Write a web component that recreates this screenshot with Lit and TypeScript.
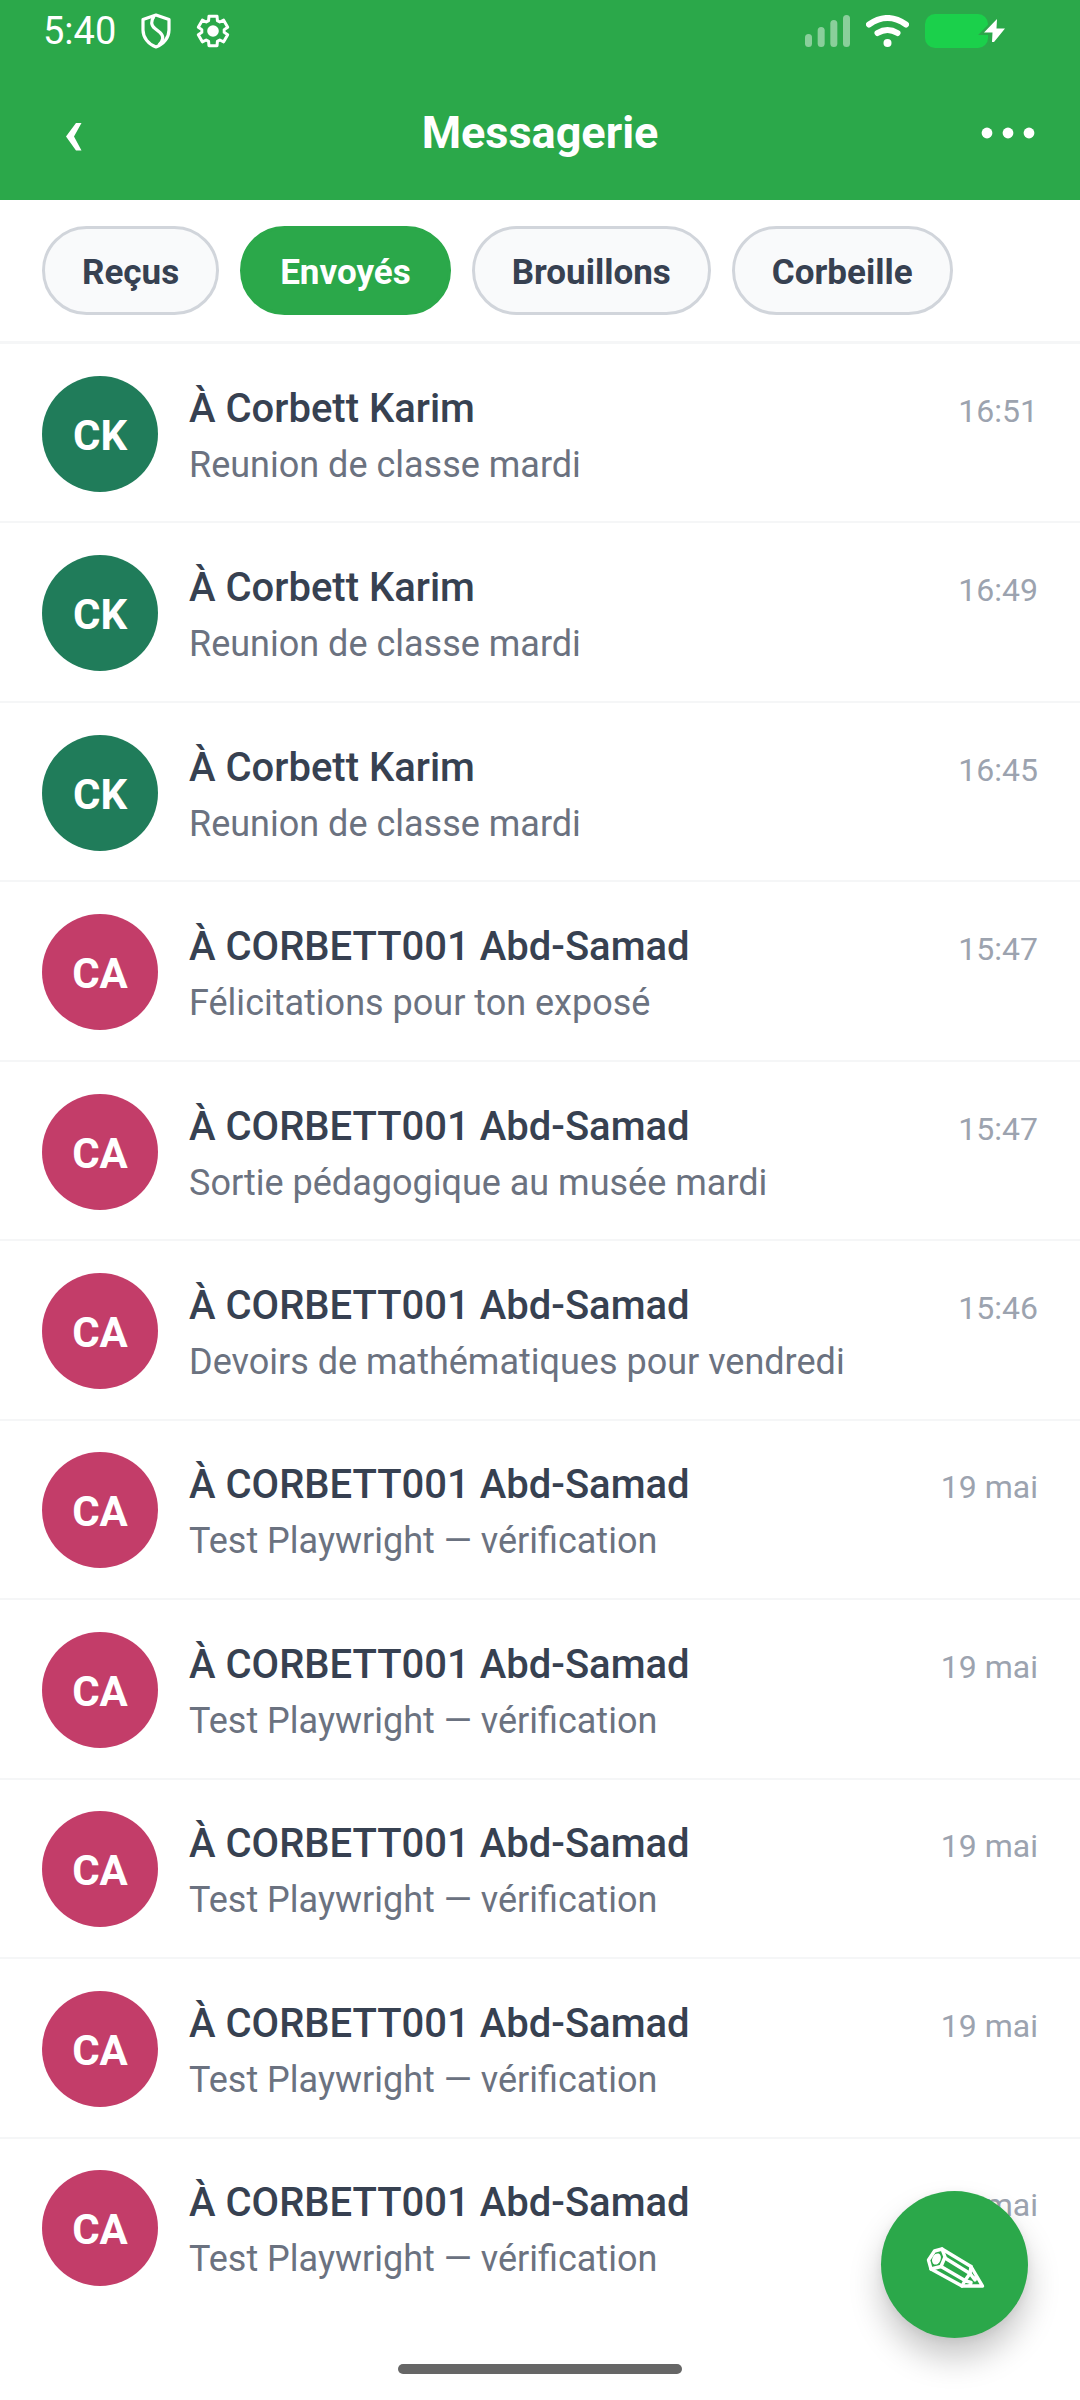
import { LitElement, html, css, svg } from "lit";
import { customElement, property, state } from "lit/decorators.js";
import { classMap } from "lit/directives/class-map.js";

interface Message {
  initials: string;
  name: string;
  subject: string;
  time: string;
  tone: "teal" | "pink";
}

const karim = (time: string): Message => ({
  initials: "CK",
  name: "À Corbett Karim",
  subject: "Reunion de classe mardi",
  time,
  tone: "teal",
});

const samad = (subject: string, time: string): Message => ({
  initials: "CA",
  name: "À CORBETT001 Abd-Samad",
  subject,
  time,
  tone: "pink",
});

const messages: Message[] = [
  karim("16:51"),
  karim("16:49"),
  karim("16:45"),
  samad("Félicitations pour ton exposé", "15:47"),
  samad("Sortie pédagogique au musée mardi", "15:47"),
  samad("Devoirs de mathématiques pour vendredi", "15:46"),
  samad("Test Playwright — vérification", "19 mai"),
  samad("Test Playwright — vérification", "19 mai"),
  samad("Test Playwright — vérification", "19 mai"),
  samad("Test Playwright — vérification", "19 mai"),
  samad("Test Playwright — vérification", "19 mai"),
];

const folders = ["Reçus", "Envoyés", "Brouillons", "Corbeille"];

/** Outline of a six-toothed cog centred on 17,17. */
const gearPath = (() => {
  const teeth = 6;
  const points: string[] = [];
  for (let i = 0; i < teeth; i++) {
    const a = (i * 2 * Math.PI) / teeth - Math.PI / 2;
    for (const [r, d] of [[11.3, -0.4], [15.2, -0.27], [15.2, 0.27], [11.3, 0.4]]) {
      points.push(`${(17 + r * Math.cos(a + d)).toFixed(2)} ${(17 + r * Math.sin(a + d)).toFixed(2)}`);
    }
  }
  return `M${points.join("L")}Z`;
})();

@customElement("status-bar")
export class StatusBar extends LitElement {
  static styles = css`
    :host {
      display: flex;
      align-items: center;
      height: 62px;
      padding: 0 74px 0 43px;
      color: #fff;
    }
    .clock {
      font-size: 38px;
      line-height: 44px;
    }
    .left,
    .right {
      display: flex;
      align-items: center;
    }
    .left {
      gap: 25px;
    }
    .right {
      gap: 16px;
      margin-left: auto;
    }
    svg {
      display: block;
    }
  `;

  render() {
    return html`
      <div class="left">
        <span class="clock">5:40</span>
        <svg width="30" height="36" viewBox="0 0 30 36" fill="none" stroke="#fff" stroke-width="3.2" stroke-linejoin="round" aria-hidden="true">
          <path d="M15 2 28 6.500V17C28 24.500 22.500 31.500 15 34C7.500 31.500 2 24.500 2 17V6.500Z" />
          <path d="M13 3.500C9.500 8 10 12.500 14 15.500L19 19.500C23 23 22.500 27.500 18 32" />
        </svg>
        <svg width="34" height="34" viewBox="0 0 34 34" aria-hidden="true">
          <path d=${gearPath} fill="none" stroke="#fff" stroke-width="3" stroke-linejoin="round" />
          <circle cx="17" cy="17" r="5.800" fill="#fff" />
        </svg>
      </div>
      <div class="right">
        <svg width="45" height="32" viewBox="0 0 45 32" fill="#fff" fill-opacity="0.450" aria-hidden="true">
          <rect x="0" y="19" width="7" height="13" rx="3.500" />
          <rect x="12.670" y="12" width="7" height="20" rx="3.500" />
          <rect x="25.330" y="5" width="7" height="27" rx="3.500" />
          <rect x="38" y="0" width="7" height="32" rx="3.500" />
        </svg>
        <svg width="43" height="32" viewBox="0 0 43 32" fill="none" stroke="#fff" stroke-width="6" stroke-linecap="round" aria-hidden="true">
          <path d="M3 9.500Q21.500 -3.500 40 9.500" />
          <path d="M11.500 18Q21.500 12 31.500 18" />
          <circle cx="21.500" cy="28" r="4" fill="#fff" stroke="none" />
        </svg>
        <svg width="81" height="34" viewBox="0 0 81 34" aria-hidden="true">
          <rect x="0" y="0" width="63" height="34" rx="10" fill="#1bd04b" />
          <path d="M72 5 59 18.500H68L67 28 80 14.500H71Z" fill="#2ba84a" stroke="#2ba84a" stroke-width="5" />
          <path d="M72 5 59 18.500H67.500L67 28H69L80 14.500H71.500L72 5Z" fill="#fff" />
        </svg>
      </div>
    `;
  }
}

@customElement("message-row")
export class MessageRow extends LitElement {
  @property({ attribute: false }) message!: Message;

  static styles = css`
    :host {
      display: flex;
      align-items: center;
      gap: 31px;
      padding: 31px 42px 29px;
    }
    .avatar {
      flex: none;
      display: grid;
      place-items: center;
      width: 116px;
      height: 116px;
      border-radius: 50%;
      color: #fff;
      font-size: 42px;
      font-weight: 700;
      line-height: 48px;
    }
    .initials {
      padding-top: 4px;
    }
    .teal {
      background: #207c5a;
    }
    .pink {
      background: #c33d69;
    }
    .body {
      flex: 1;
      min-width: 0;
      display: grid;
      gap: 8px;
      padding-top: 6px;
    }
    .top {
      display: flex;
      align-items: baseline;
      justify-content: space-between;
      gap: 20px;
    }
    .name {
      color: #374151;
      font-size: 40px;
      font-weight: 500;
      line-height: 48px;
    }
    .time {
      flex: none;
      color: #9ca3af;
      font-size: 32px;
      line-height: 40px;
    }
    .subject {
      color: #6b7280;
      font-size: 36px;
      line-height: 48px;
      overflow: hidden;
      text-overflow: ellipsis;
      white-space: nowrap;
    }
  `;

  render() {
    const m = this.message;
    return html`
      <div class=${classMap({ avatar: true, [m.tone]: true })}><span class="initials">${m.initials}</span></div>
      <div class="body">
        <div class="top">
          <span class="name">${m.name}</span>
          <span class="time">${m.time}</span>
        </div>
        <span class="subject">${m.subject}</span>
      </div>
    `;
  }
}

@customElement("app-root")
export class AppRoot extends LitElement {
  @state() private folder = "Envoyés";

  static styles = css`
    :host {
      position: relative;
      display: flex;
      flex-direction: column;
      min-height: 100vh;
      background: #fff;
      font-family: Roboto, "Liberation Sans", sans-serif;
    }
    button {
      font-family: inherit;
      cursor: pointer;
    }
    svg {
      display: block;
    }
    .header {
      background: #2ba84a;
      color: #fff;
    }
    .bar {
      display: grid;
      grid-template-columns: 64px 1fr 64px;
      align-items: center;
      height: 134px;
      padding: 4px 40px 0;
    }
    .title {
      margin: 0;
      text-align: center;
      font-size: 45px;
      font-weight: 700;
      line-height: 56px;
    }
    .icon {
      display: grid;
      place-items: center;
      width: 64px;
      height: 64px;
      padding: 0;
      border: 0;
      background: none;
    }
    .back {
      padding-top: 8px;
    }
    .tabs {
      display: flex;
      gap: 21px;
      padding: 26px 42px;
      border-bottom: 3px solid #f5f6f7;
    }
    .tab {
      height: 89px;
      padding: 4px 37px 0;
      border: 3px solid #d1d5db;
      border-radius: 45px;
      background: #f9fafb;
      color: #374151;
      font-size: 35px;
      font-weight: 700;
      line-height: 42px;
    }
    .tab.active {
      border-color: #2ba84a;
      background: #2ba84a;
      color: #fff;
    }
    .list {
      flex: 1;
      display: flex;
      flex-direction: column;
      margin: 0;
      padding: 0;
      list-style: none;
    }
    .item {
      flex: 1;
      display: grid;
      align-items: center;
      border-bottom: 2px solid #f5f6f7;
    }
    .item:last-child {
      border-color: transparent;
    }
    .fab {
      position: absolute;
      right: 52px;
      bottom: 62px;
      display: grid;
      place-items: center;
      width: 147px;
      height: 147px;
      padding: 4px 0 0;
      border: 0;
      border-radius: 50%;
      background: #2ba84a;
      box-shadow: 0 20px 32px rgba(0, 0, 0, 0.22), 0 2px 10px rgba(0, 0, 0, 0.06);
    }
    .footer {
      display: flex;
      justify-content: center;
      align-items: flex-end;
      height: 56px;
      padding-bottom: 26px;
    }
    .handle {
      width: 284px;
      height: 10px;
      border-radius: 5px;
      background: #666;
    }
  `;

  private pencil() {
    return svg`
      <g fill="none" stroke="#fff" stroke-width="3.400" stroke-linejoin="round" stroke-linecap="round">
        <path d="M9.500 5 17 3 46 20.500 57.500 40H37L6 23 3.500 14Z" />
        <path d="M17 3 20 11 16 20.500 6 23" />
        <path d="M20 12 45 27.500 46 20.500" />
        <path d="M16 20.500 40 34.500 45 27.500" />
        <path d="M40 34.500 37 40M45 27.500 50 34 51 31M41 35 46 36.500 45 39" />
      </g>
      <ellipse cx="11.500" cy="13" rx="4.200" ry="5.800" fill="#fff" transform="rotate(22 11.500 13)" />`;
  }

  render() {
    return html`
      <header class="header">
        <status-bar></status-bar>
        <div class="bar">
          <button class="icon back" type="button" aria-label="Retour">
            <svg width="32" height="28" viewBox="0 0 32 28"><path d="M10 0H15.500L8 13.500 15.500 27.500H10L0 13.500Z" fill="#fff" transform="translate(10 0)" /></svg>
          </button>
          <h1 class="title">Messagerie</h1>
          <button class="icon" type="button" aria-label="Plus d’options">
            <svg width="54" height="12" viewBox="0 0 54 12" fill="#fff">
              <circle cx="6" cy="6" r="5.400" /><circle cx="27" cy="6" r="5.400" /><circle cx="48" cy="6" r="5.400" />
            </svg>
          </button>
        </div>
      </header>
      <nav class="tabs" aria-label="Dossiers">
        ${folders.map(
          (name) => html`<button
            type="button"
            class=${classMap({ tab: true, active: name === this.folder })}
            aria-pressed=${name === this.folder}
            @click=${() => (this.folder = name)}
          >${name}</button>`,
        )}
      </nav>
      <ul class="list">
        ${messages.map((m) => html`<li class="item"><message-row .message=${m}></message-row></li>`)}
      </ul>
      <footer class="footer"><div class="handle"></div></footer>
      <button class="fab" type="button" aria-label="Nouveau message">
        <svg width="60" height="42" viewBox="0 0 60 42">${this.pencil()}</svg>
      </button>
    `;
  }
}
